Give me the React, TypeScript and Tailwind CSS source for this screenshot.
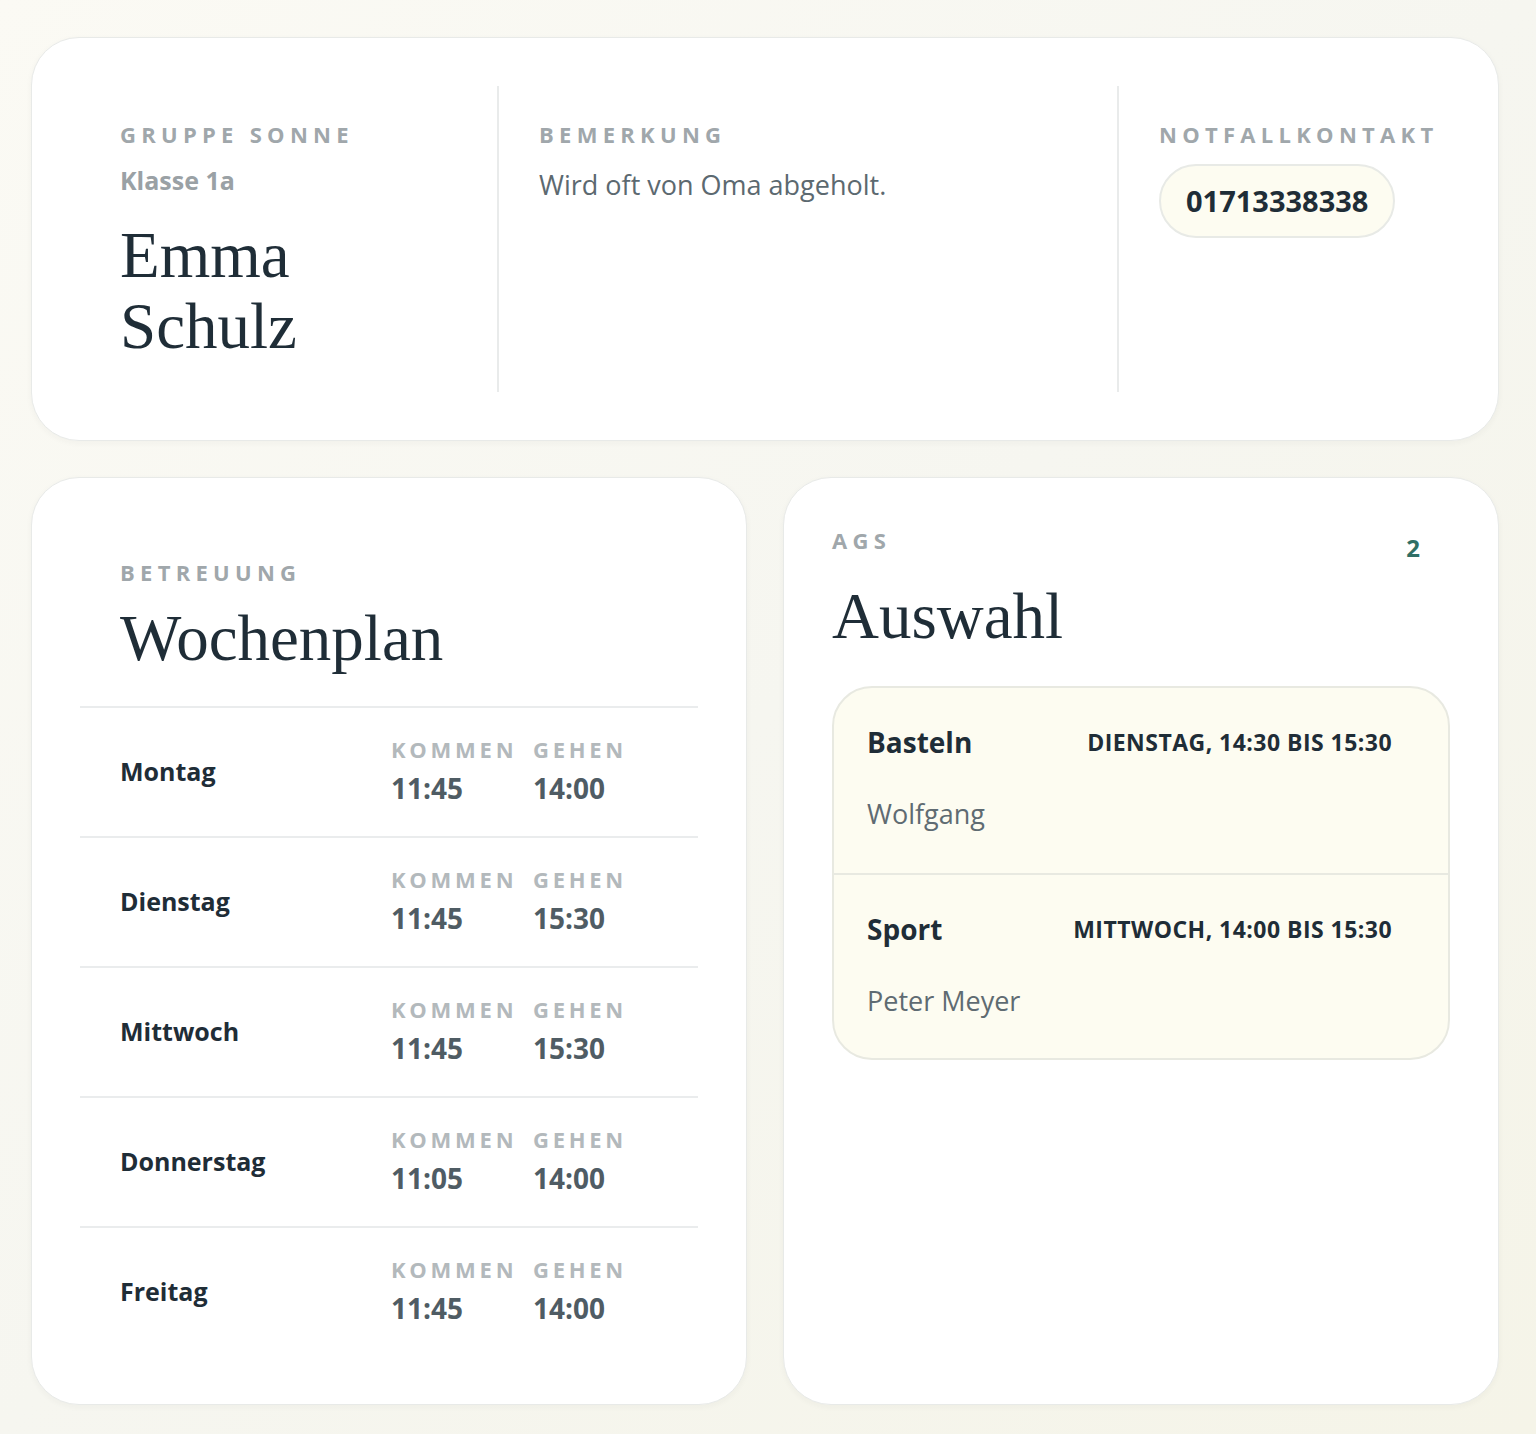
import React from "react";

const sans = "font-['Open_Sans','Noto_Sans',sans-serif]";
const serif = "font-['Liberation_Serif','Times_New_Roman',serif]";

const label =
  "text-[22px] leading-[28px] font-bold uppercase tracking-[0.24em] text-[#a0a7ab]";

const days = [
  { day: "Montag", come: "11:45", go: "14:00" },
  { day: "Dienstag", come: "11:45", go: "15:30" },
  { day: "Mittwoch", come: "11:45", go: "15:30" },
  { day: "Donnerstag", come: "11:05", go: "14:00" },
  { day: "Freitag", come: "11:45", go: "14:00" },
];

const ags = [
  { name: "Basteln", when: "Dienstag, 14:30 bis 15:30", who: "Wolfgang" },
  { name: "Sport", when: "Mittwoch, 14:00 bis 15:30", who: "Peter Meyer" },
];

const card =
  "bg-white border border-[#e8eae8] rounded-[48px] shadow-[0_2px_6px_rgba(40,50,40,0.04)]";

const StudentCard = () => {
  return (
    <section className={`${card} p-12 grid grid-cols-[417px_620px_1fr]`}>
      <div className="px-10 pt-[34px] pb-[30px]">
        <div className={label}>Gruppe Sonne</div>
        <div className="mt-[17px] text-[25px] leading-[30px] font-bold text-[#9aa1a5]">Klasse 1a</div>
        <h1 className={`${serif} mt-[25px] text-[65px] leading-[71px] text-[#1f2d37]`}>
          Emma
          <br />
          Schulz
        </h1>
      </div>
      <div className="px-10 pt-[34px] border-l-2 border-[#e9ebeb]">
        <div className={label}>Bemerkung</div>
        <p className="mt-[20px] text-[27px] leading-[34px] text-[#5c6970]">Wird oft von Oma abgeholt.</p>
      </div>
      <div className="px-10 pt-[34px] border-l-2 border-[#e9ebeb]">
        <div className={label}>Notfallkontakt</div>
        <div className="mt-4 inline-flex items-center h-[74px] px-[25px] rounded-full bg-[#fdfcf1] border-2 border-[#e8eae6] text-[29px] font-bold text-[#1f2d37]">
          01713338338
        </div>
      </div>
    </section>
  );
};

const WeekCard = () => {
  return (
    <section className={`${card} p-12`}>
      <div className="px-10 pt-[32px] pb-[30px]">
        <div className={label}>Betreuung</div>
        <h2 className={`${serif} mt-[14px] text-[65px] leading-[76px] text-[#1f2d37]`}>Wochenplan</h2>
      </div>
      {days.map((d) => (
        <div key={d.day} className="h-[130px] border-t-2 border-[#eaeced] px-10 flex items-center">
          <div className="w-[271px] text-[25px] font-bold text-[#1f2d37]">{d.day}</div>
          <div className="grid grid-cols-[142px_auto] gap-y-[10px] -mt-[4px]">
            <div className="text-[22px] leading-[26px] font-bold tracking-[0.17em] text-[#b3b9bc]">KOMMEN</div>
            <div className="text-[22px] leading-[26px] font-bold tracking-[0.17em] text-[#b3b9bc]">GEHEN</div>
            <div className="text-[28px] leading-[32px] font-bold text-[#4f5c64]">{d.come}</div>
            <div className="text-[28px] leading-[32px] font-bold text-[#4f5c64]">{d.go}</div>
          </div>
        </div>
      ))}
    </section>
  );
};

const AgCard = () => {
  return (
    <section className={`${card} p-12`}>
      <div className="flex items-start justify-between">
        <div className={label}>AGs</div>
        <div className="mr-[30px] mt-[7px] text-[24px] leading-[30px] font-bold text-[#2f6f66]">2</div>
      </div>
      <h2 className={`${serif} mt-[15px] text-[65px] leading-[76px] text-[#1f2d37]`}>Auswahl</h2>
      <div className="mt-[32px] rounded-[40px] bg-[#fdfcf1] border-2 border-[#e8e9e1] overflow-hidden">
        {ags.map((a, i) => (
          <div
            key={a.name}
            className={`h-[185px] pl-[33px] pr-[56px] pt-[34px] ${i > 0 ? "border-t-2 border-[#e8e9e1]" : ""}`}
          >
            <div className="flex items-center justify-between">
              <div className="text-[28px] leading-[40px] font-bold text-[#1f2d37]">{a.name}</div>
              <div className="text-[23px] leading-[30px] font-bold uppercase tracking-[0.02em] text-[#1f2d37]">{a.when}</div>
            </div>
            <div className="mt-[35px] text-[27px] leading-[34px] text-[#5f6b72]">{a.who}</div>
          </div>
        ))}
      </div>
    </section>
  );
};

export default function App() {
  return (
    <div
      className={`${sans} min-h-[1434px] bg-gradient-to-br from-[#fbfaf4] via-[#f6f6f0] to-[#f5f4e8] pl-[31px] pr-[37px] pt-[37px] pb-[30px] flex flex-col gap-9`}
    >
      <StudentCard />
      <div className="grid grid-cols-2 gap-9">
        <WeekCard />
        <AgCard />
      </div>
    </div>
  );
}
